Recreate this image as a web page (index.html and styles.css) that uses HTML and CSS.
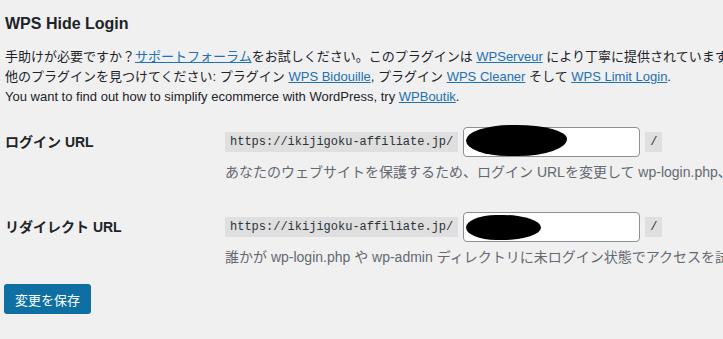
FILE: index.html
```html
<!DOCTYPE html>
<html lang="ja">

<head>
    <meta charset="UTF-8">
    <meta name="viewport" content="width=device-width, initial-scale=1.0">
    <title>WPS Hide Login</title>
    <link rel="stylesheet" href="styles.css">
</head>

<body>
    <div class="wrap">
        <h2 class="titulo">WPS Hide Login</h2>
        <div class="intro">
            <p>手助けが必要ですか？<a href="#">サポートフォーラム</a>をお試しください。このプラグインは <a href="#">WPServeur</a> により丁寧に提供されています。</p>
            <p>他のプラグインを見つけてください: プラグイン <a href="#">WPS Bidouille</a>, プラグイン <a href="#">WPS Cleaner</a> そして <a href="#">WPS Limit Login</a>.</p>
            <p>You want to find out how to simplify ecommerce with WordPress, try <a href="#">WPBoutik</a>.</p>
        </div>

        <div class="linha linha-login">
            <label class="rotulo">ログイン URL</label>
            <div class="campo">
                <div class="url-linha">
                    <code>https://ikijigoku-affiliate.jp/</code>
                    <div class="entrada"><span class="tarja tarja1"></span></div>
                    <code>/</code>
                </div>
                <p class="descricao">あなたのウェブサイトを保護するため、ログイン URLを変更して wp-login.php、wp-admin へのアクセスを遮断します。</p>
            </div>
        </div>

        <div class="linha linha-redir">
            <label class="rotulo">リダイレクト URL</label>
            <div class="campo">
                <div class="url-linha">
                    <code>https://ikijigoku-affiliate.jp/</code>
                    <div class="entrada"><span class="tarja tarja2"></span></div>
                    <code>/</code>
                </div>
                <p class="descricao">誰かが wp-login.php や wp-admin ディレクトリに未ログイン状態でアクセスを試みた場合のリダイレクト先です。</p>
            </div>
        </div>

        <button class="salvar">変更を保存</button>
    </div>
</body>

</html>
```

FILE: styles.css
```css
html,
body {
    margin: 0;
    padding: 0;
    overflow: hidden;
}

body {
    background-color: #f0f0f1;
    color: #1d2327;
    font-family: "Liberation Sans", "Noto Sans CJK JP", sans-serif;
    font-size: 13px;
    width: 723px;
    height: 339px;
}

.wrap {
    padding: 13px 0 0 5px;
    white-space: nowrap;
}

.titulo {
    font-size: 16px;
    font-weight: 600;
    line-height: 22px;
    margin: 0 0 12px 0;
}

.intro p {
    margin: 0;
    line-height: 20px;
}

a {
    color: #2271b1;
    text-decoration: underline;
}

/* linhas do formulario */
.linha {
    display: grid;
    grid-template-columns: 220px 1fr;
}

.linha-login {
    margin-top: 20px;
}

.linha-redir {
    margin-top: 30px;
}

.rotulo {
    font-size: 14px;
    font-weight: 600;
    line-height: 30px;
}

.url-linha {
    display: flex;
    align-items: center;
    gap: 5px;
    height: 30px;
}

code {
    font-family: "Liberation Mono", monospace;
    font-size: 12px;
    line-height: 14px;
    padding: 3px 5px;
    background-color: rgba(0, 0, 0, 0.07);
    color: #2c3338;
}

.entrada {
    box-sizing: border-box;
    width: 177px;
    height: 30px;
    background-color: white;
    border: 1px solid #8c8f94;
    border-radius: 4px;
    display: flex;
    align-items: center;
    padding-left: 2px;
}

/* tarja preta que esconde o slug */
.tarja {
    display: block;
    background-color: black;
}

.tarja1 {
    width: 101px;
    height: 31px;
    margin-top: -3px;
    border-radius: 45% 50% 48% 42% / 50% 45% 55% 50%;
}

.tarja2 {
    width: 75px;
    height: 25px;
    border-radius: 40% 50% 50% 40% / 50% 50% 50% 50%;
}

.descricao {
    margin: 5px 0 0 0;
    font-size: 14px;
    line-height: 20px;
    color: #646970;
}

.salvar {
    margin-top: 17px;
    margin-left: -1px;
    background-color: #0e6fa3;
    color: white;
    border: none;
    border-radius: 3px;
    width: 87px;
    height: 30px;
    font-family: "Liberation Sans", "Noto Sans CJK JP", sans-serif;
    font-size: 13px;
    padding: 0;
    cursor: pointer;
}
```
